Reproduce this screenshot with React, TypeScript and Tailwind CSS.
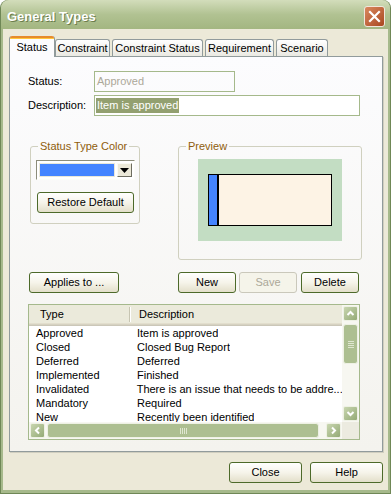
import React from "react";

const rows = [
  ["Approved", "Item is approved"],
  ["Closed", "Closed Bug Report"],
  ["Deferred", "Deferred"],
  ["Implemented", "Finished"],
  ["Invalidated", "There is an issue that needs to be addre..."],
  ["Mandatory", "Required"],
  ["New", "Recently been identified"],
];

function XPButton({
  children,
  className = "",
  disabled = false,
}: {
  children: React.ReactNode;
  className?: string;
  disabled?: boolean;
}) {
  return (
    <div
      className={`flex h-[21px] items-center justify-center rounded-[3px] border ${
        disabled
          ? "border-[#cac8bb] bg-[#f5f4ea] text-[#aca899]"
          : "border-[#4d6a2a] bg-linear-to-b from-[#ffffff] via-[#f6f4ea] to-[#e3dfca] text-black"
      } ${className}`}
    >
      {children}
    </div>
  );
}

function ScrollBtn({ dir }: { dir: "up" | "down" | "left" | "right" }) {
  const paths = {
    up: "M3.5 8 L6.5 5 L9.5 8",
    down: "M3.5 5 L6.5 8 L9.5 5",
    left: "M8 3.5 L5 6.5 L8 9.5",
    right: "M5 3.5 L8 6.5 L5 9.5",
  };
  return (
    <div className="flex h-[15px] w-[15px] items-center justify-center rounded-[2px] border border-[#eef1e4] bg-linear-to-br from-[#c9d6b0] to-[#94aa76]">
      <svg width="13" height="13" viewBox="0 0 13 13">
        <path d={paths[dir]} stroke="white" strokeWidth="2" fill="none" />
      </svg>
    </div>
  );
}

function Tab({ label, active, className = "" }: { label: string; active?: boolean; className?: string }) {
  if (active) {
    return (
      <div
        className={`relative z-10 -mb-[1px] flex h-[21px] flex-col rounded-t-[3px] border-x border-[#919b9c] bg-[#fcfcfe] ${className}`}
      >
        <div className="h-[2px] rounded-t-[3px] bg-[#e68b2c]" />
        <div className="h-[1px] bg-[#ffc73c]" />
        <div className="flex flex-1 items-center justify-center pb-[2px]">{label}</div>
      </div>
    );
  }
  return (
    <div
      className={`flex h-[17px] items-center justify-center rounded-t-[3px] border-x border-t border-[#919b9c] bg-linear-to-b from-[#ffffff] to-[#eae9e2] pt-[1px] ${className}`}
    >
      {label}
    </div>
  );
}

export default function App() {
  return (
    <div className="h-[494px] w-[391px] rounded-t-[8px] bg-[#6f8756] px-[1px] pb-[1px] font-['Liberation_Sans',Arial,sans-serif] text-[11px] text-black">
      <div className="flex h-full flex-col rounded-t-[8px] bg-[#a6b98b]">
        {/* title bar */}
        <div className="flex h-[29px] shrink-0 items-center justify-between rounded-t-[8px] bg-linear-to-b from-[#d3ddbb] via-[#b1c292] to-[#a3b681] pl-[6px] pr-[5px]">
          <span className="mt-[4px] text-[13px] font-bold text-white [text-shadow:1px_1px_0_#6b7d4c]">
            General Types
          </span>
          <div className="mt-[3px] flex h-[21px] w-[21px] items-center justify-center rounded-[3px] border border-[#f1e6dc] bg-linear-to-br from-[#d9885e] to-[#a9471f]">
            <svg width="13" height="13" viewBox="0 0 13 13">
              <path d="M2 2 L11 11 M11 2 L2 11" stroke="white" strokeWidth="2.2" strokeLinecap="square" />
            </svg>
          </div>
        </div>

        {/* body */}
        <div className="mx-[2px] mb-[3px] flex flex-1 flex-col bg-[#ece9d8] pt-[7px]">
          {/* tabs */}
          <div className="ml-[6px] flex h-[20px] items-end">
            <Tab label="Status" active className="w-[46px]" />
            <Tab label="Constraint" className="w-[55px]" />
            <Tab label="Constraint Status" className="ml-[2px] w-[91px]" />
            <Tab label="Requirement" className="ml-[2px] w-[69px]" />
            <Tab label="Scenario" className="ml-[2px] w-[52px]" />
          </div>

          {/* panel */}
          <div className="ml-[6px] flex h-[396px] w-[374px] flex-col border border-[#919b9c] bg-linear-to-b from-[#fcfcfe] to-[#f4f3ee] pl-[18px] pt-[14px] shadow-[1px_1px_0_#d0cebf]">
            <div className="flex h-[21px] items-center">
              <span className="w-[66px]">Status:</span>
              <div className="flex h-[21px] w-[141px] items-center border border-[#a5b98b] px-[2px] text-[#aca899]">
                Approved
              </div>
            </div>
            <div className="mt-[3px] flex h-[21px] items-center">
              <span className="w-[66px]">Description:</span>
              <div className="flex h-[21px] w-[266px] items-center border border-[#a5b98b] bg-white px-[1px]">
                <span className="bg-[#93a070] px-[1px] leading-[15px] text-white">Item is approved</span>
              </div>
            </div>

            {/* groups */}
            <div className="mt-[24px] flex items-start">
              <fieldset className="ml-[2px] w-[110px] rounded-[3px] border border-[#d0d0bf] pb-[10px]">
                <legend className="ml-[7px] px-[2px] leading-[13px] text-[#8f5d0c]">Status Type Color</legend>
                <div className="ml-[5px] mt-[7px] flex h-[20px] w-[99px] border border-t-[#8c8c7a] border-l-[#8c8c7a] border-b-[#fdfdf8] border-r-[#fdfdf8] bg-white p-[2px]">
                  <div className="mr-[2px] flex-1 border border-[#e9e7d9] bg-[#4484ff]" />
                  <div className="flex w-[15px] items-center justify-center border border-t-[#fafaf4] border-l-[#fafaf4] border-b-[#6e6d60] border-r-[#6e6d60] bg-[#ece9d8]">
                    <svg width="9" height="5" viewBox="0 0 9 5">
                      <path d="M0 0 L9 0 L4.5 5 Z" fill="black" />
                    </svg>
                  </div>
                </div>
                <XPButton className="ml-[6px] mt-[12px] w-[97px]">Restore Default</XPButton>
              </fieldset>

              <fieldset className="ml-[38px] w-[184px] rounded-[3px] border border-[#d0d0bf] pb-[18px]">
                <legend className="ml-[7px] px-[2px] leading-[13px] text-[#8f5d0c]">Preview</legend>
                <div className="ml-[19px] mt-[6px] h-[82px] w-[144px] bg-[#c3ddc3] pl-[10px] pt-[15px]">
                  <div className="flex h-[52px] w-[124px] border border-black">
                    <div className="w-[8px] bg-[#4484ff]" />
                    <div className="w-[2px] bg-black" />
                    <div className="flex-1 bg-[#fdf3e5]" />
                  </div>
                </div>
              </fieldset>
            </div>

            {/* action buttons */}
            <div className="mt-[12px] flex">
              <XPButton className="ml-[1px] w-[90px]">Applies to ...</XPButton>
              <XPButton className="ml-[59px] w-[58px]">New</XPButton>
              <XPButton disabled className="ml-[3px] w-[58px]">Save</XPButton>
              <XPButton className="ml-[4px] w-[58px]">Delete</XPButton>
            </div>

            {/* list */}
            <div className="mt-[11px] flex h-[136px] w-[332px] flex-col border border-[#a5b98c] bg-white">
              <div className="flex h-[117px]">
                <div className="flex flex-1 flex-col overflow-hidden">
                  <div className="flex h-[21px] shrink-0 flex-col bg-[#ebeadb]">
                    <div className="flex flex-1 items-center pt-[1px]">
                      <div className="w-[100px] pl-[11px]">Type</div>
                      <div className="h-[15px] w-[1px] bg-[#c7c5b2]" />
                      <div className="h-[15px] w-[1px] bg-white" />
                      <div className="pl-[8px]">Description</div>
                    </div>
                    <div className="h-[1px] bg-[#e2decd]" />
                    <div className="h-[1px] bg-[#d6d2c2]" />
                    <div className="h-[1px] bg-[#cbc7b8]" />
                  </div>
                  {rows.map(([t, d]) => (
                    <div key={t} className="flex h-[14px] shrink-0 items-center whitespace-nowrap">
                      <div className="w-[101px] pl-[7px]">{t}</div>
                      <div className="overflow-hidden pl-[7px]">{d}</div>
                    </div>
                  ))}
                </div>
                <div className="flex w-[17px] flex-col items-center bg-[#f7f7f1] pt-[1px] pb-[1px]">
                  <ScrollBtn dir="up" />
                  <div className="mt-[3px] flex h-[40px] w-[15px] flex-col items-center justify-center gap-[1px] rounded-[3px] border border-[#eef1e4] bg-[#adbf91]">
                    <div className="h-[1px] w-[6px] bg-[#dfe6d0]" />
                    <div className="h-[1px] w-[6px] bg-[#dfe6d0]" />
                    <div className="h-[1px] w-[6px] bg-[#dfe6d0]" />
                    <div className="h-[1px] w-[6px] bg-[#dfe6d0]" />
                  </div>
                  <div className="flex-1" />
                  <ScrollBtn dir="down" />
                </div>
              </div>
              <div className="flex h-[17px]">
                <div className="flex flex-1 items-center bg-[#f7f7f1] pl-[1px] pr-[1px]">
                  <ScrollBtn dir="left" />
                  <div className="ml-[2px] flex h-[15px] w-[272px] items-center justify-center gap-[1px] rounded-[3px] border border-[#eef1e4] bg-[#adbf91]">
                    <div className="h-[6px] w-[1px] bg-[#dfe6d0]" />
                    <div className="h-[6px] w-[1px] bg-[#dfe6d0]" />
                    <div className="h-[6px] w-[1px] bg-[#dfe6d0]" />
                    <div className="h-[6px] w-[1px] bg-[#dfe6d0]" />
                  </div>
                  <div className="flex-1" />
                  <ScrollBtn dir="right" />
                </div>
                <div className="w-[17px] bg-[#ecebe0]" />
              </div>
            </div>
          </div>

          {/* bottom buttons */}
          <div className="mt-[10px] flex justify-end pr-[5px]">
            <XPButton className="w-[73px]">Close</XPButton>
            <XPButton className="ml-[8px] w-[73px]">Help</XPButton>
          </div>
        </div>
      </div>
    </div>
  );
}
